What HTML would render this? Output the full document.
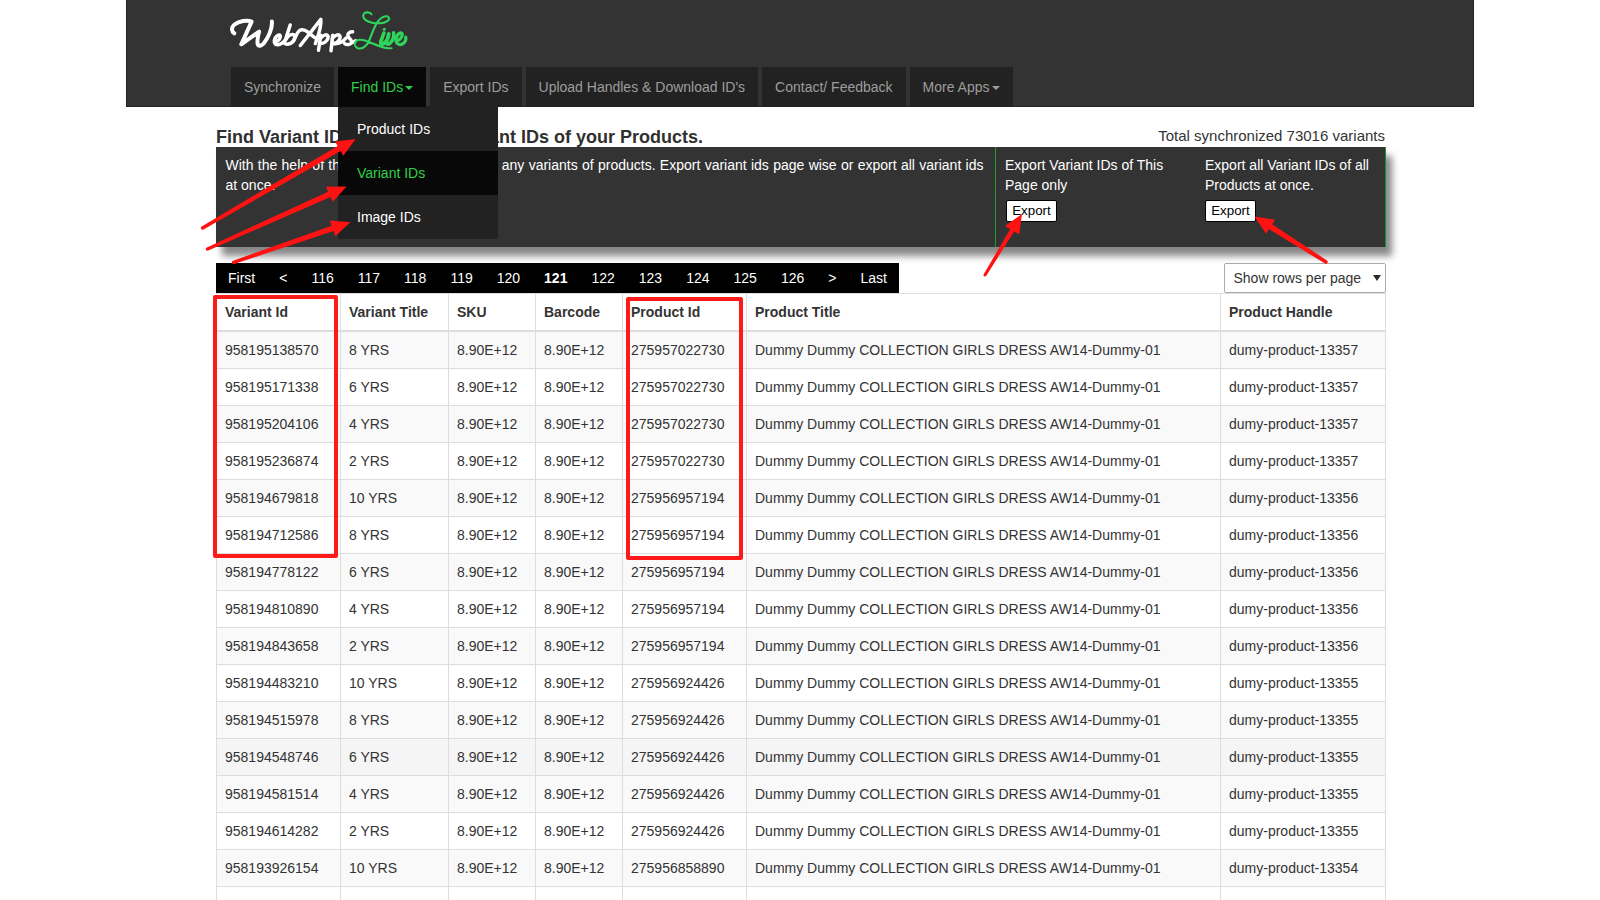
<!DOCTYPE html>
<html><head><meta charset="utf-8"><title>Find Variant IDs</title>
<style>
*{box-sizing:border-box}
html,body{margin:0;padding:0}
body{width:1600px;height:900px;overflow:hidden;background:#fff;font-family:"Liberation Sans",sans-serif;font-size:14px;line-height:20px;color:#333;position:relative}
#hdr{position:absolute;left:126px;top:0;width:1348px;height:107px;background:#333;border:1px solid #242424;border-top:0}
#nav{position:absolute;left:231px;top:67px;height:40px;white-space:nowrap;font-size:0}
#nav span.t{display:inline-block;height:40px;padding:10px 13px;background:#222;color:#9d9d9d;font-size:14px;line-height:20px;margin-right:4px;vertical-align:top}
#nav span.t.act{background:#080808;color:#2fd04a}
.caret{display:inline-block;width:0;height:0;margin-left:2px;vertical-align:middle;border-top:4px solid;border-right:4px solid transparent;border-left:4px solid transparent}
#dd{position:absolute;left:338px;top:107px;width:160px;height:132px;background:#222;z-index:5}
#dd div{height:44px;padding:12px 19px;color:#fff;font-size:14px;line-height:20px}
#dd div.act{background:#080808;color:#2fd04a}
#h1{position:absolute;left:216px;top:127px;font-size:18px;font-weight:bold;line-height:20px;white-space:nowrap;color:#303030}
#tot{position:absolute;right:215px;top:126px;font-size:15px;line-height:20px;white-space:nowrap;color:#333}
#box{position:absolute;left:216px;top:147px;width:1170px;height:100px;background:#333;color:#fff;box-shadow:6px 9px 7px #888;border-right:1px solid #109a25}
#box .c1{position:absolute;left:9.5px;top:8px;width:758px;line-height:20px;text-align:justify}
#box .c2{position:absolute;left:779px;top:0;width:200px;height:100px;border-left:1px solid #1c9c2c;padding:8px 0 0 9px}
#box .c3{position:absolute;left:989px;top:8px;width:180px}
.btn{display:block;margin-top:5px;margin-left:1px;width:51px;height:22px;background:#fff;border:1px solid #000;border-radius:2px;color:#000;font-size:13.33px;line-height:20px;text-align:center}
#pg{position:absolute;left:216px;top:263px;height:30px;background:#000;color:#fff;white-space:nowrap;font-size:0}
#pg span{display:inline-block;padding:5px 12px;font-size:14px;line-height:20px;height:30px}
#pg span.b{font-weight:bold}
#sel{position:absolute;left:1224px;top:263px;width:162px;height:30px;border:1px solid #aaa;border-radius:2px;background:#fff;font-size:14px;line-height:28px;padding-left:8.5px;color:#333}
#sel i{position:absolute;left:147.5px;top:11px;width:0;height:0;border-left:4px solid transparent;border-right:4px solid transparent;border-top:6px solid #2a2a2a}
table{position:absolute;left:216px;top:293px;width:1169px;border-collapse:collapse;border-spacing:0;table-layout:fixed}
td,th{border:1px solid #ddd;padding:8px;line-height:20px;text-align:left;white-space:nowrap;overflow:hidden;height:37px}
th{font-weight:bold;border-bottom:2px solid #ddd;height:37px;padding-bottom:7px}
tbody tr:nth-child(odd){background:#f9f9f9}
tbody tr:nth-child(12){background:#f5f5f5}
.rr{position:absolute;border:4px solid #ff1a1a;border-radius:2px;z-index:6}
#ov{position:absolute;left:0;top:0;z-index:10;pointer-events:none}
</style></head><body>
<div id="hdr"></div>
<svg id="logo" style="position:absolute;left:226px;top:8px" width="190" height="50" viewBox="226 8 190 50" fill="none" stroke-linecap="round" stroke-linejoin="round">
<g stroke="#fff" stroke-width="3.5">
<path stroke-width="4" d="M234.3 33.4C231.6 31.5 230.8 27.5 234.5 24.5C239 21 247 19.8 251.6 21.6L241.3 44.3L259.1 31.6C258 36 256.8 41.5 257.8 44.5C258.6 46.8 261.5 46 264 43C268.5 37.5 272.5 28 271.9 21.6"/>
<path d="M275.5 42.2C279 40.5 281.2 37.3 280.2 35.6C279 34 275 36.5 274.3 40.5C273.8 43.8 276 45.4 279 44.6C281 44 283 42.5 284.5 40.8"/>
<path d="M290.2 25L284.3 43.2C286.5 45 290.5 44.3 293 41.5C295.5 38.5 295.6 35 292.8 34.5C290.5 34.2 287.5 36.5 286 39.5"/>
<path d="M293 41.5C295 39 296 34.5 298.5 31.5C301 28.6 305 29.8 308.5 32.5C311 34.4 313.5 37 315.5 38"/>
<path d="M300.3 45.5L320.8 19.3C321.8 27 317.8 37 315.4 43.5"/>
<path d="M320.8 35.2L318.5 50.3M320 39C322.5 35.5 326.5 33.6 327.8 35.8C329 38.5 326 43 321.5 43.6"/>
<path d="M332.7 35.2L331 50.8M332 39C334.5 35.5 338.5 33.6 339.8 35.8C341 38.5 338 43 333.5 43.6C338 44 343 42 346 38"/>
<path d="M352.6 31.8C349.5 31.5 347 34 348.2 36.6C349.4 39 352.5 40.5 351.5 42.8C350.5 44.8 346.5 45 344.6 43.6M351.5 42.8C353 42.6 354.5 41.8 355.5 40.8"/>
</g>
<g stroke="#2fd45a">
<path stroke-width="2.1" d="M371.5 14.4C370.5 12.4 366.5 11.8 364.4 13.2C362.8 14.5 362.8 17.2 364.5 19C367 21.5 371 22.8 375.4 23.2C380 23.5 386 22.8 388.6 20C390 18 388.5 16 385.5 16.3C382.5 16.8 379 19.5 376.5 23.5C374.5 27 373 31 372 33.4C370.8 36.5 369.8 39.5 368.6 41.7C367.5 43.8 366.2 45.5 364.7 46.6C362.5 48.3 360 49 357.8 48.2C355.5 47.2 354.2 44.8 355 42.7C355.8 40.8 357.8 39.8 360 39.8C363.5 39.8 368 41.5 372 43.2C377 45.3 382.5 47.5 387.2 48.1L391.6 48.3"/>
<path stroke-width="3.6" d="M383.9 33L380.8 41.6C380.3 43.8 381.5 44.8 383 44C385 42.8 387 40.5 388.3 37.5L388.8 33.8L386.6 42C386.4 44.2 388 44.8 389.6 43.6C392 41.6 394.4 37.5 393.6 32.8"/>
<circle cx="384.3" cy="29.3" r="1.5" fill="#2fd45a" stroke="none"/>
<path stroke-width="3.3" d="M397 41C400 39.6 402.8 36.5 402.2 34C401.5 32 398.5 33 396.8 36.2C395.3 39.2 395.8 43 398.5 44.2C401 45.2 404 43.5 405.3 41C406 39.5 406 38 405.7 37.3"/>
</g>
</svg>
<div id="nav"><span class="t">Synchronize</span><span class="t act">Find IDs<b class="caret"></b></span><span class="t">Export IDs</span><span class="t">Upload Handles &amp; Download ID's</span><span class="t">Contact/ Feedback</span><span class="t">More Apps<b class="caret"></b></span></div>
<div id="h1">Find Variant IDs /<span style="margin-left:27px"> </span>Export Variant IDs of your Products.</div>
<div id="tot">Total synchronized 73016 variants</div>
<div id="box">
<div class="c1">With the help of this page you can get ID of any variants of products. Export variant ids page wise or export all variant ids at once.</div>
<div class="c2">Export Variant IDs of This Page only<span class="btn">Export</span></div>
<div class="c3">Export all Variant IDs of all Products at once.<span class="btn" style="margin-left:0">Export</span></div>
</div>
<div id="dd"><div>Product IDs</div><div class="act">Variant IDs</div><div>Image IDs</div></div>
<div id="pg"><span>First</span><span>&lt;</span><span>116</span><span>117</span><span>118</span><span>119</span><span>120</span><span class="b">121</span><span>122</span><span>123</span><span>124</span><span>125</span><span>126</span><span>&gt;</span><span>Last</span></div>
<div id="sel">Show rows per page<i></i></div>
<table>
<colgroup><col style="width:124px"><col style="width:108px"><col style="width:87px"><col style="width:87px"><col style="width:124px"><col style="width:474px"><col style="width:165px"></colgroup>
<thead><tr><th>Variant Id</th><th>Variant Title</th><th>SKU</th><th>Barcode</th><th>Product Id</th><th>Product Title</th><th>Product Handle</th></tr></thead>
<tbody>
<tr><td>958195138570</td><td>8 YRS</td><td>8.90E+12</td><td>8.90E+12</td><td>275957022730</td><td>Dummy Dummy COLLECTION GIRLS DRESS AW14-Dummy-01</td><td>dumy-product-13357</td></tr>
<tr><td>958195171338</td><td>6 YRS</td><td>8.90E+12</td><td>8.90E+12</td><td>275957022730</td><td>Dummy Dummy COLLECTION GIRLS DRESS AW14-Dummy-01</td><td>dumy-product-13357</td></tr>
<tr><td>958195204106</td><td>4 YRS</td><td>8.90E+12</td><td>8.90E+12</td><td>275957022730</td><td>Dummy Dummy COLLECTION GIRLS DRESS AW14-Dummy-01</td><td>dumy-product-13357</td></tr>
<tr><td>958195236874</td><td>2 YRS</td><td>8.90E+12</td><td>8.90E+12</td><td>275957022730</td><td>Dummy Dummy COLLECTION GIRLS DRESS AW14-Dummy-01</td><td>dumy-product-13357</td></tr>
<tr><td>958194679818</td><td>10 YRS</td><td>8.90E+12</td><td>8.90E+12</td><td>275956957194</td><td>Dummy Dummy COLLECTION GIRLS DRESS AW14-Dummy-01</td><td>dumy-product-13356</td></tr>
<tr><td>958194712586</td><td>8 YRS</td><td>8.90E+12</td><td>8.90E+12</td><td>275956957194</td><td>Dummy Dummy COLLECTION GIRLS DRESS AW14-Dummy-01</td><td>dumy-product-13356</td></tr>
<tr><td>958194778122</td><td>6 YRS</td><td>8.90E+12</td><td>8.90E+12</td><td>275956957194</td><td>Dummy Dummy COLLECTION GIRLS DRESS AW14-Dummy-01</td><td>dumy-product-13356</td></tr>
<tr><td>958194810890</td><td>4 YRS</td><td>8.90E+12</td><td>8.90E+12</td><td>275956957194</td><td>Dummy Dummy COLLECTION GIRLS DRESS AW14-Dummy-01</td><td>dumy-product-13356</td></tr>
<tr><td>958194843658</td><td>2 YRS</td><td>8.90E+12</td><td>8.90E+12</td><td>275956957194</td><td>Dummy Dummy COLLECTION GIRLS DRESS AW14-Dummy-01</td><td>dumy-product-13356</td></tr>
<tr><td>958194483210</td><td>10 YRS</td><td>8.90E+12</td><td>8.90E+12</td><td>275956924426</td><td>Dummy Dummy COLLECTION GIRLS DRESS AW14-Dummy-01</td><td>dumy-product-13355</td></tr>
<tr><td>958194515978</td><td>8 YRS</td><td>8.90E+12</td><td>8.90E+12</td><td>275956924426</td><td>Dummy Dummy COLLECTION GIRLS DRESS AW14-Dummy-01</td><td>dumy-product-13355</td></tr>
<tr><td>958194548746</td><td>6 YRS</td><td>8.90E+12</td><td>8.90E+12</td><td>275956924426</td><td>Dummy Dummy COLLECTION GIRLS DRESS AW14-Dummy-01</td><td>dumy-product-13355</td></tr>
<tr><td>958194581514</td><td>4 YRS</td><td>8.90E+12</td><td>8.90E+12</td><td>275956924426</td><td>Dummy Dummy COLLECTION GIRLS DRESS AW14-Dummy-01</td><td>dumy-product-13355</td></tr>
<tr><td>958194614282</td><td>2 YRS</td><td>8.90E+12</td><td>8.90E+12</td><td>275956924426</td><td>Dummy Dummy COLLECTION GIRLS DRESS AW14-Dummy-01</td><td>dumy-product-13355</td></tr>
<tr><td>958193926154</td><td>10 YRS</td><td>8.90E+12</td><td>8.90E+12</td><td>275956858890</td><td>Dummy Dummy COLLECTION GIRLS DRESS AW14-Dummy-01</td><td>dumy-product-13354</td></tr>
<tr><td>&nbsp;</td><td>&nbsp;</td><td>&nbsp;</td><td>&nbsp;</td><td>&nbsp;</td><td>&nbsp;</td><td>&nbsp;</td></tr>
</tbody></table>
<div class="rr" style="left:213px;top:295px;width:125px;height:263px"></div>
<div class="rr" style="left:626px;top:297px;width:117px;height:263px"></div>
<svg id="ov" width="1600" height="900" viewBox="0 0 1600 900">
<g fill="#ff1212" stroke="none">
<path d="M203.5 229.4 L340.6 151.0 L343.3 155.7 L355.6 139.0 L335.0 141.4 L337.7 146.1 L201.7 226.4 A1.7 1.7 0 0 0 203.5 229.4Z"/>
<path d="M208.3 250.6 L330.4 196.9 L332.7 201.8 L346.6 186.5 L325.9 186.8 L328.1 191.7 L206.9 247.4 A1.7 1.7 0 0 0 208.3 250.6Z"/>
<path d="M234.2 264.0 L333.5 231.1 L335.2 236.2 L350.5 222.2 L329.8 220.6 L331.6 225.7 L233.0 260.8 A1.7 1.7 0 0 0 234.2 264.0Z"/>
<path d="M986.3 275.8 L1014.1 231.4 L1019.2 234.5 L1022.0 214.0 L1005.1 226.0 L1010.2 229.1 L983.7 274.2 A1.5 1.5 0 0 0 986.3 275.8Z"/>
<path d="M1327.0 260.4 L1272.1 224.3 L1275.0 219.7 L1254.5 216.5 L1266.1 233.7 L1269.0 229.1 L1325.0 263.6 A1.9 1.9 0 0 0 1327.0 260.4Z"/>
</g>
</svg>
</body></html>
